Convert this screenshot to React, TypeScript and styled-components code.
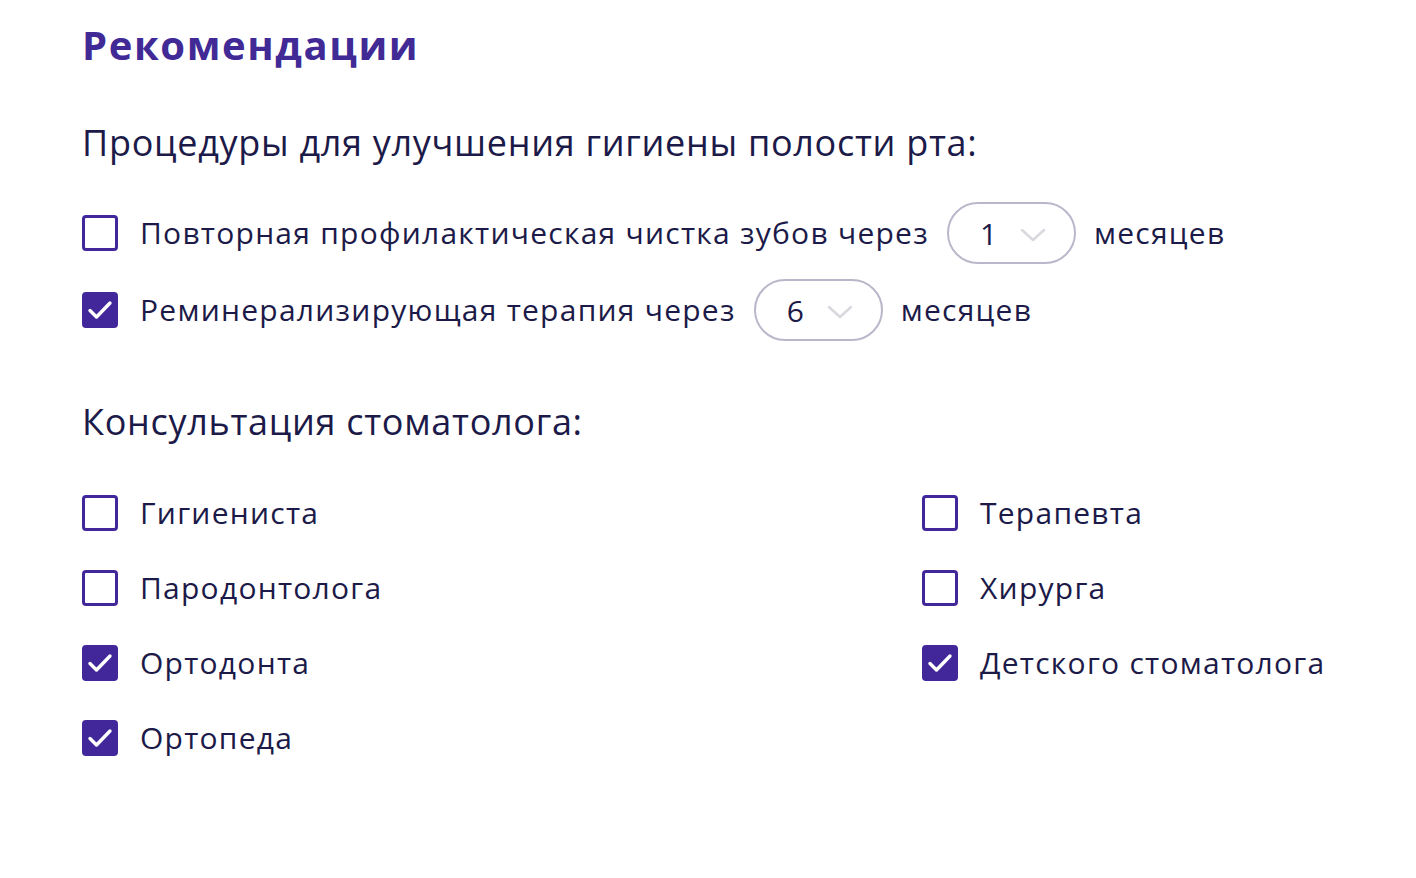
import React, { useState } from 'react';
import styled, { createGlobalStyle } from 'styled-components';

const GlobalStyle = createGlobalStyle`
  body {
    margin: 0;
    background: #fff;
    font-family: 'Open Sans', 'Noto Sans', sans-serif;
  }
`;

interface Item {
  label: string;
  checked: boolean;
}

const doctors: Item[] = [
  { label: 'Гигиениста', checked: false },
  { label: 'Терапевта', checked: false },
  { label: 'Пародонтолога', checked: false },
  { label: 'Хирурга', checked: false },
  { label: 'Ортодонта', checked: true },
  { label: 'Детского стоматолога', checked: true },
  { label: 'Ортопеда', checked: true },
];

const CheckBox: React.FC<{ checked: boolean; onClick: () => void }> = ({ checked, onClick }) => (
  <Box $checked={checked} onClick={onClick}>
    {checked && (
      <svg width="26" height="22" viewBox="0 0 26 22">
        <polyline points="3,11.5 9.5,18 23,4" fill="none" stroke="#fff" strokeWidth="3.4" strokeLinecap="round" strokeLinejoin="round" />
      </svg>
    )}
  </Box>
);

const Select: React.FC<{ value: number }> = ({ value }) => (
  <Pill>
    <span>{value}</span>
    <svg width="26" height="16" viewBox="0 0 26 16">
      <polyline points="2,3 13,13 24,3" fill="none" stroke="#d9d8de" strokeWidth="2.5" strokeLinecap="round" strokeLinejoin="round" />
    </svg>
  </Pill>
);

const App: React.FC = () => {
  const [procs, setProcs] = useState([false, true]);
  const [docs, setDocs] = useState(doctors);

  const toggleProc = (index: number) => {
    setProcs((prev) => prev.map((v, i) => (i === index ? !v : v)));
  };

  const toggleDoc = (index: number) => {
    setDocs((prev) => prev.map((d, i) => (i === index ? { ...d, checked: !d.checked } : d)));
  };

  return (
    <Page>
      <GlobalStyle />
      <Title>Рекомендации</Title>

      <SectionTitle $top={52}>Процедуры для улучшения гигиены полости рта:</SectionTitle>
      <ProcList>
        <Row>
          <CheckBox checked={procs[0]} onClick={() => toggleProc(0)} />
          <Label>Повторная профилактическая чистка зубов через</Label>
          <Select value={1} />
          <Label>месяцев</Label>
        </Row>
        <Row>
          <CheckBox checked={procs[1]} onClick={() => toggleProc(1)} />
          <Label>Реминерализирующая терапия через</Label>
          <Select value={6} />
          <Label>месяцев</Label>
        </Row>
      </ProcList>

      <SectionTitle $top={59}>Консультация стоматолога:</SectionTitle>
      <DocGrid>
        {docs.map((doc, index) => (
          <DocItem key={doc.label}>
            <CheckBox checked={doc.checked} onClick={() => toggleDoc(index)} />
            <Label>{doc.label}</Label>
          </DocItem>
        ))}
      </DocGrid>
    </Page>
  );
};
export default App;

const Page = styled.div`
  display: flex;
  flex-direction: column;
  align-items: flex-start;
  padding: 21px 0 0 82px;
  color: #1c1a48;
`;

const Title = styled.h1`
  margin: 0;
  font-size: 40px;
  line-height: 48px;
  font-weight: 700;
  color: #412a96;
  letter-spacing: 1.6px;
`;

const SectionTitle = styled.h2<{ $top: number }>`
  margin: ${(p) => p.$top}px 0 0;
  font-size: 36px;
  line-height: 44px;
  font-weight: 400;
  color: #1c1a48;
  letter-spacing: 0.7px;
`;

const ProcList = styled.div`
  display: flex;
  flex-direction: column;
  gap: 15px;
  margin-top: 37px;
`;

const Row = styled.div`
  display: flex;
  align-items: center;
  height: 62px;
`;

const Label = styled.span`
  font-size: 30px;
  line-height: 40px;
  letter-spacing: 1.25px;
  color: #1c1a48;
  margin-left: 22px;

  ${Row} > &:last-child {
    margin-left: 18px;
  }
`;

const Box = styled.div<{ $checked: boolean }>`
  display: flex;
  align-items: center;
  justify-content: center;
  flex-shrink: 0;
  box-sizing: border-box;
  width: 36px;
  height: 36px;
  border-radius: 4px;
  border: 3px solid #41279a;
  background: ${(p) => (p.$checked ? '#41279a' : '#fff')};
  cursor: pointer;
`;

const Pill = styled.div`
  display: flex;
  align-items: center;
  box-sizing: border-box;
  width: 129px;
  height: 62px;
  margin-left: 18px;
  padding: 0 28px 0 31px;
  justify-content: space-between;
  border: 2px solid #bab7ca;
  border-radius: 31px;
  font-size: 30px;
  color: #1c1a48;

  svg {
    margin-top: 3px;
  }
`;

const DocGrid = styled.div`
  display: grid;
  grid-template-columns: 840px auto;
  row-gap: 35px;
  margin-top: 49px;
`;

const DocItem = styled.div`
  display: flex;
  align-items: center;
  height: 40px;
`;
